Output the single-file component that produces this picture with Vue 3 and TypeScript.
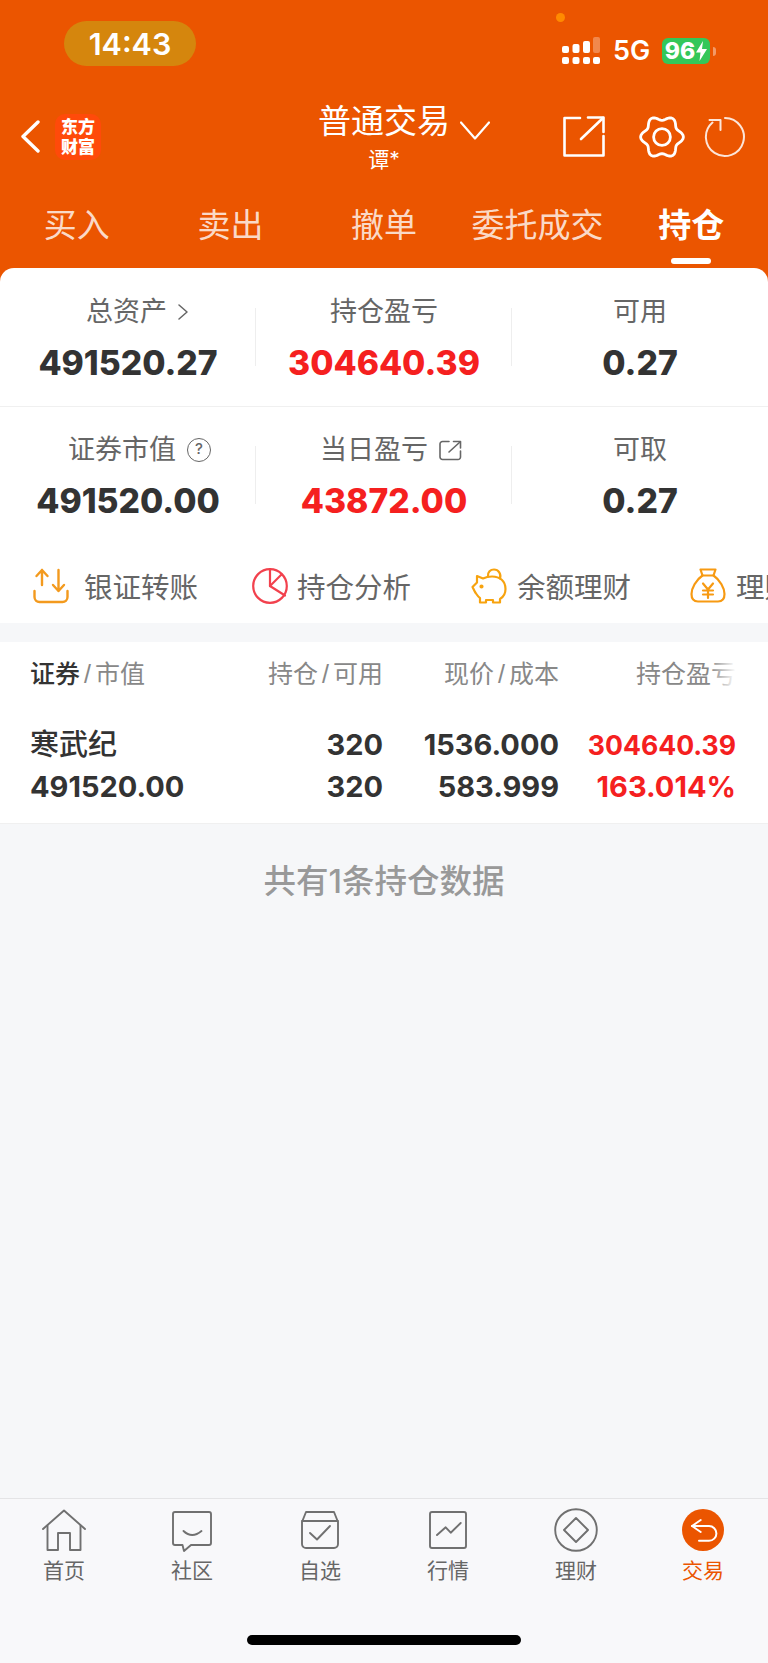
<script setup lang="ts">
const tabs = ['买入', '卖出', '撤单', '委托成交', '持仓']
const cx = 24, cy = 24
const pts: string[] = []
for (let i = 0; i < 72; i++) {
  const t = (i / 72) * Math.PI * 2
  const r = 19 + 2.4 * Math.cos(6 * t)
  pts.push(`${(cx + r * Math.cos(t)).toFixed(2)},${(cy + r * Math.sin(t)).toFixed(2)}`)
}
const gear = pts.join(' ')
</script>

<template>
  <div class="page">
    <div class="hero">
      <div class="status">
        <div class="pill">14:43</div>
        <span class="cam-dot"></span>
        <div class="status-right">
          <svg width="38" height="27" viewBox="0 0 38 27" fill="#fff">
            <rect x="0" y="9" width="7" height="7" rx="2" />
            <rect x="10.5" y="7" width="7" height="9" rx="2" />
            <rect x="21" y="4" width="7" height="12" rx="2" />
            <rect x="31" y="0" width="7" height="16" rx="2" opacity=".3" />
            <rect x="0" y="20" width="7" height="7" rx="2" />
            <rect x="10.5" y="20" width="7" height="7" rx="2" />
            <rect x="21" y="20" width="7" height="7" rx="2" />
            <rect x="31" y="20" width="7" height="7" rx="2" />
          </svg>
          <span class="net">5G</span>
          <div class="battery">
            <span>96</span>
            <svg width="11" height="20" viewBox="0 0 11 20" fill="#fff"><path d="M7 0 L0 11.5 H4.5 L3.5 20 L11 8 H6 Z" /></svg>
          </div>
          <span class="nub"></span>
        </div>
      </div>

      <div class="nav">
        <div class="nav-left">
          <svg width="19" height="33" viewBox="0 0 19 33" fill="none" stroke="#fff" stroke-width="3.4" stroke-linecap="round" stroke-linejoin="round"><path d="M17 2 L2 16.5 L17 31" /></svg>
          <div class="logo">东方<br />财富</div>
        </div>
        <div class="nav-center">
          <div class="nav-title">
            普通交易
            <svg class="title-arrow" width="30" height="19" viewBox="0 0 30 19" fill="none" stroke="#fff" stroke-width="2.2" stroke-linecap="round" stroke-linejoin="round"><path d="M1 1.5 L15 17.5 L29 1.5" /></svg>
          </div>
          <div class="nav-sub">谭*</div>
        </div>
        <div class="nav-right">
          <svg width="42" height="41" viewBox="0 0 42 41" fill="none" stroke="#fff" stroke-width="2.6" stroke-linecap="round" stroke-linejoin="round"><path d="M17 2 H1.5 V39.5 H40.5 V20" /><path d="M18 23 L40 2" /><path d="M25 1.5 H40.5 V16" /></svg>
          <svg width="48" height="48" viewBox="0 0 48 48" fill="none" stroke="#fff" stroke-width="2.8"><polygon :points="gear" stroke-linejoin="round" /><circle cx="24" cy="24" r="8.4" /></svg>
          <svg width="42" height="42" viewBox="0 0 42 42" fill="none" stroke="#fff" stroke-opacity=".85" stroke-width="2" stroke-linecap="round" stroke-linejoin="round"><path d="M5.5 4 H16.5 V14" /><path d="M21 2 A19 19 0 1 1 8.5 6.6" /></svg>
        </div>
      </div>

      <div class="tabs">
        <div v-for="(t, i) in tabs" :key="t" class="tab" :class="{ active: i === 4 }">{{ t }}</div>
      </div>

      <div class="card">
        <div class="stats first">
          <div class="cell">
            <div class="label pad-18">总资产
              <svg width="10" height="16" viewBox="0 0 10 16" fill="none" stroke="#666" stroke-width="1.5" stroke-linecap="round" stroke-linejoin="round"><path d="M1 1 L9 8 L1 15" /></svg>
            </div>
            <div class="value">491520.27</div>
          </div>
          <div class="cell">
            <div class="label">持仓盈亏</div>
            <div class="value red">304640.39</div>
          </div>
          <div class="cell last">
            <div class="label">可用</div>
            <div class="value">0.27</div>
          </div>
        </div>
        <div class="stats second">
          <div class="cell">
            <div class="label pad-23">证券市值
              <span class="help">?</span>
            </div>
            <div class="value">491520.00</div>
          </div>
          <div class="cell">
            <div class="label pad-14">当日盈亏
              <svg width="23" height="21" viewBox="0 0 23 21" fill="none" stroke="#666" stroke-width="1.6" stroke-linecap="round" stroke-linejoin="round"><path d="M10 1.5 H3.5 A2.5 2.5 0 0 0 1 4 V17 A2.5 2.5 0 0 0 3.5 19.5 H19 A2.5 2.5 0 0 0 21.5 17 V11" /><path d="M10 12 L21 2" /><path d="M14.5 1.5 H21.5 V8" /></svg>
            </div>
            <div class="value red">43872.00</div>
          </div>
          <div class="cell last">
            <div class="label">可取</div>
            <div class="value">0.27</div>
          </div>
        </div>
        <div class="actions">
          <div class="action gap-15">
            <svg width="36" height="36" viewBox="0 0 36 36" fill="none" stroke="#F39A1E" stroke-width="2.4" stroke-linecap="round" stroke-linejoin="round"><path d="M1.5 23 V29 A5 5 0 0 0 6.5 34 H29.5 A5 5 0 0 0 34.5 29 V23" /><path d="M9 17 V2 M3.5 8 L9 2 L14.5 8" /><path d="M25.5 2 V23 M20 17 L25.5 23 L31 17" /></svg>
            <span>银证转账</span>
          </div>
          <div class="action gap-9">
            <svg width="36" height="36" viewBox="0 0 36 36" fill="none" stroke="#F2414D" stroke-width="2.2" stroke-linecap="round" stroke-linejoin="round"><circle cx="18" cy="18" r="16.8" /><path d="M18 1.5 V18 L33 27.5" /><path d="M18 18 L29.5 6.5" /></svg>
            <span>持仓分析</span>
          </div>
          <div class="action gap-10">
            <svg width="36" height="36" viewBox="0 0 36 36" fill="none" stroke="#F7A30F" stroke-width="2.2" stroke-linecap="round" stroke-linejoin="round"><path d="M4 24 L1.5 19 L6 14.5 L6 8 L12 10.5 C15 9 18 8.5 21 8.5 C29 8.5 34.5 13 34.5 21 C34.5 25.5 32.5 29 29 31 V34.5 H22 V32 H15 V34.5 H9 V30 C7 29 5.5 26 4 24 Z" /><path d="M17 8.5 C16.5 4 19.5 1.5 23 1.5 C27.5 1.5 30.5 6 29 10.5" /><circle cx="10.5" cy="18.5" r="1" fill="#F7A30F" /></svg>
            <span>余额理财</span>
          </div>
          <div class="action gap-10">
            <svg width="36" height="36" viewBox="0 0 36 36" fill="none" stroke="#F79A12" stroke-width="2.2" stroke-linecap="round" stroke-linejoin="round"><path d="M10.5 1.5 H25.5 L23.5 7.5 H12.5 Z" /><path d="M12.5 7.5 C6 12 1.5 20 1.5 26 C1.5 31.5 4.5 33.5 8 33.5 H28 C31.5 33.5 34.5 31.5 34.5 26 C34.5 20 30 12 23.5 7.5" /><path d="M13 15.5 L18 21.5 L23 15.5 M18 21.5 V30 M13 22.5 H23 M13 26.5 H23" /></svg>
            <span>理财</span>
          </div>
        </div>
      </div>
    </div>

    <div class="table">
      <div class="thead">
        <div><b>证券</b><i>/</i>市值</div>
        <div class="num">持仓<i>/</i>可用</div>
        <div class="num">现价<i>/</i>成本</div>
        <div class="num fade">持仓盈亏</div>
      </div>
      <div class="trow">
        <div class="name">寒武纪</div>
        <div class="num">320</div>
        <div class="num">1536.000</div>
        <div class="num red small">304640.39</div>
      </div>
      <div class="trow">
        <div>491520.00</div>
        <div class="num">320</div>
        <div class="num">583.999</div>
        <div class="num red">163.014%</div>
      </div>
    </div>

    <div class="count">共有1条持仓数据</div>

    <div class="tabbar">
      <div class="bar-items">
        <div class="bar-item">
          <svg width="44" height="44" viewBox="0 0 44 44" fill="none" stroke="#707070" stroke-width="1.9" stroke-linecap="round" stroke-linejoin="round"><path d="M1 21 L22 2.5 L43 21" /><path d="M5.5 17.5 V42 H16 V25 H28 V42 H38.5 V17.5" /></svg>
          <span>首页</span>
        </div>
        <div class="bar-item">
          <svg width="44" height="44" viewBox="0 0 44 44" fill="none" stroke="#707070" stroke-width="1.9" stroke-linecap="round" stroke-linejoin="round"><path d="M5 4 H39 A2 2 0 0 1 41 6 V35 A2 2 0 0 1 39 37 H21 L14 43 L12.5 37 H5 A2 2 0 0 1 3 35 V6 A2 2 0 0 1 5 4 Z" /><path d="M13.5 23 Q22 31 31.5 23" /></svg>
          <span>社区</span>
        </div>
        <div class="bar-item">
          <svg width="44" height="44" viewBox="0 0 44 44" fill="none" stroke="#707070" stroke-width="1.9" stroke-linecap="round" stroke-linejoin="round"><path d="M4 14 L8 4 H36 L40 14 V36 A4 4 0 0 1 36 40 H8 A4 4 0 0 1 4 36 Z" /><path d="M4 13 H40" /><path d="M12 25 L19 31.5 L32 18" /></svg>
          <span>自选</span>
        </div>
        <div class="bar-item">
          <svg width="44" height="44" viewBox="0 0 44 44" fill="none" stroke="#707070" stroke-width="1.9" stroke-linecap="round" stroke-linejoin="round"><rect x="4" y="4" width="36" height="36" rx="2" /><path d="M11 27 L19.7 19.3 L24.7 24.7 L34.7 15" /></svg>
          <span>行情</span>
        </div>
        <div class="bar-item">
          <svg width="44" height="44" viewBox="0 0 44 44" fill="none" stroke="#707070" stroke-width="1.9" stroke-linejoin="round"><circle cx="22" cy="22" r="20.8" /><path d="M22 10 L34 22 L22 34 L10 22 Z" /></svg>
          <span>理财</span>
        </div>
        <div class="bar-item on">
          <svg width="44" height="44" viewBox="0 0 44 44" fill="none" stroke="#fff" stroke-width="2" stroke-linecap="round" stroke-linejoin="round"><circle cx="22" cy="22" r="21" fill="#EB5500" stroke="none" /><path d="M19.7 12 L11 18 L19.7 24" /><path d="M11 18 H28 A7.4 7.4 0 0 1 28 32.8 H18" /></svg>
          <span>交易</span>
        </div>
      </div>
      <div class="home-bar"></div>
    </div>
  </div>
</template>

<style>
html, body { margin: 0; padding: 0; background: #F6F7F9; }
</style>

<style scoped>
.page {
  width: 768px;
  height: 1663px;
  display: flex;
  flex-direction: column;
  overflow: hidden;
  background: #F6F7F9;
  color: #333;
  font-family: Inter, "Noto Sans CJK SC", sans-serif;
}
.hero { background: #EB5500; }

.status {
  height: 100px;
  box-sizing: border-box;
  padding: 21px 52px 0 64px;
  display: flex;
  justify-content: space-between;
  align-items: flex-start;
  position: relative;
}
.pill {
  width: 132px;
  height: 45px;
  border-radius: 23px;
  background: #D5860D;
  color: #fff;
  font-size: 30.5px;
  font-weight: 600;
  line-height: 45px;
  text-align: center;
}
.cam-dot {
  position: absolute;
  left: 556px;
  top: 13px;
  width: 9px;
  height: 9px;
  border-radius: 50%;
  background: #FF8A00;
}
.status-right {
  margin-top: 16px;
  display: flex;
  align-items: flex-end;
}
.net {
  margin-left: 13px;
  color: #fff;
  font-size: 27px;
  font-weight: 600;
  line-height: 27px;
  width: 49px;
}
.battery {
  width: 48px;
  height: 26px;
  border-radius: 6px;
  background: #34C759;
  color: #fff;
  font-size: 23px;
  font-weight: 800;
  display: flex;
  align-items: center;
  justify-content: center;
  gap: 1px;
  line-height: 26px;
}
.nub {
  width: 3px;
  height: 9px;
  margin: 0 0 8px 3px;
  border-radius: 0 3px 3px 0;
  background: rgba(255, 255, 255, 0.4);
}

.nav {
  height: 72px;
  display: grid;
  grid-template-columns: 1fr auto 1fr;
  align-items: center;
}
.nav-left {
  padding-left: 21px;
  display: flex;
  align-items: center;
  gap: 15px;
}
.logo {
  width: 46px;
  height: 46px;
  border-radius: 10px;
  background: #FF4A0A;
  color: #fff;
  font-size: 17px;
  font-weight: 900;
  line-height: 20px;
  text-align: center;
  box-sizing: border-box;
  padding-top: 3px;
}
.nav-center {
  text-align: center;
  color: #fff;
}
.nav-title {
  position: relative;
  font-size: 33px;
  line-height: 42px;
}
.title-arrow {
  position: absolute;
  left: calc(100% + 10px);
  top: 21px;
}
.nav-sub {
  font-size: 21px;
  line-height: 26px;
  margin-top: 5px;
}
.nav-right {
  display: flex;
  justify-content: flex-end;
  align-items: center;
  padding-right: 22px;
}
.nav-right svg:nth-child(2) { margin: 0 18px 0 33px; }

.tabs {
  height: 96px;
  box-sizing: border-box;
  padding-top: 10px;
  display: grid;
  grid-template-columns: repeat(5, 1fr);
  align-items: center;
  text-align: center;
}
.tab {
  position: relative;
  font-size: 33px;
  line-height: 44px;
  color: rgba(255, 255, 255, 0.8);
}
.tab.active {
  color: #fff;
  font-weight: 700;
}
.tab.active::after {
  content: "";
  position: absolute;
  left: 57px;
  top: 55px;
  width: 40px;
  height: 6px;
  border-radius: 3px;
  background: #fff;
}

.card {
  background: #fff;
  border-radius: 14px 14px 0 0;
  height: 355px;
  overflow: hidden;
}
.stats {
  display: grid;
  grid-template-columns: repeat(3, 1fr);
  text-align: center;
}
.stats.first {
  box-sizing: border-box;
  height: 139px;
  padding-top: 24px;
  border-bottom: 1px solid #F0F0F0;
}
.stats.second { padding-top: 23px; }
.cell { position: relative; }
.cell::after {
  content: "";
  position: absolute;
  right: 0;
  top: 16px;
  width: 1px;
  height: 58px;
  background: #EEE;
}
.cell.last::after { display: none; }
.label {
  height: 40px;
  font-size: 27px;
  line-height: 40px;
  color: #666;
  display: flex;
  justify-content: center;
  align-items: center;
  gap: 11px;
}
.pad-18 { padding-left: 18px; }
.pad-23 { padding-left: 23px; }
.pad-14 { padding-left: 14px; }
.help {
  box-sizing: border-box;
  width: 24px;
  height: 24px;
  border: 1.6px solid #666;
  border-radius: 50%;
  font-size: 15px;
  line-height: 20px;
  text-align: center;
  font-weight: 500;
}
.value {
  margin-top: 9px;
  height: 44px;
  font-size: 33.7px;
  font-weight: 800;
  line-height: 44px;
  color: #333;
}
.red { color: #F5201F; }

.actions {
  margin-top: 41px;
  padding-left: 33px;
  display: grid;
  grid-template-columns: repeat(4, 219px);
}
.action {
  display: flex;
  align-items: center;
  font-size: 28.5px;
  line-height: 40px;
  color: #666;
  white-space: nowrap;
}
.action span { padding-top: 4px; }
.gap-15 { gap: 15px; }
.gap-9 { gap: 9px; }
.gap-10 { gap: 10px; }

.table {
  margin-top: 19px;
  background: #fff;
  height: 182px;
  box-sizing: border-box;
  padding: 0 32px 0 30px;
  border-bottom: 1px solid #F0F0F0;
}
.thead, .trow {
  display: grid;
  grid-template-columns: 1fr 176px 176px 177px;
}
.thead {
  height: 60px;
  align-items: center;
  font-size: 25px;
  color: #888;
}
.thead b { font-weight: 500; color: #333; }
.thead i { font-style: normal; margin: 0 4px; font-family: "Liberation Sans", sans-serif; }
.num { text-align: right; }
.fade { position: relative; }
.fade::after {
  content: "";
  position: absolute;
  right: 0;
  top: 0;
  bottom: 0;
  width: 26px;
  background: linear-gradient(90deg, rgba(255, 255, 255, 0), #fff);
}
.trow {
  height: 42px;
  align-items: center;
  font-size: 29px;
  font-weight: 700;
  line-height: 42px;
}
.thead + .trow { margin-top: 22px; }
.name { font-weight: 500; font-size: 29px; }
.small { font-size: 26.6px; }

.count {
  margin-top: 36px;
  text-align: center;
  font-size: 32.5px;
  font-weight: 500;
  line-height: 44px;
  color: #999;
}

.tabbar {
  margin-top: auto;
  height: 165px;
  box-sizing: border-box;
  border-top: 1px solid #E4E4E6;
  background: #F8F8FA;
  padding-top: 9px;
}
.bar-items {
  display: grid;
  grid-template-columns: repeat(6, 128px);
}
.bar-item {
  display: flex;
  flex-direction: column;
  align-items: center;
  font-size: 21px;
  line-height: 30px;
  color: #666;
}
.bar-item span { margin-top: 4px; }
.bar-item.on { color: #EB5500; transform: translateX(-1px); }
.home-bar {
  margin: 49px 0 0 247px;
  width: 274px;
  height: 10px;
  border-radius: 5px;
  background: #000;
}
</style>
